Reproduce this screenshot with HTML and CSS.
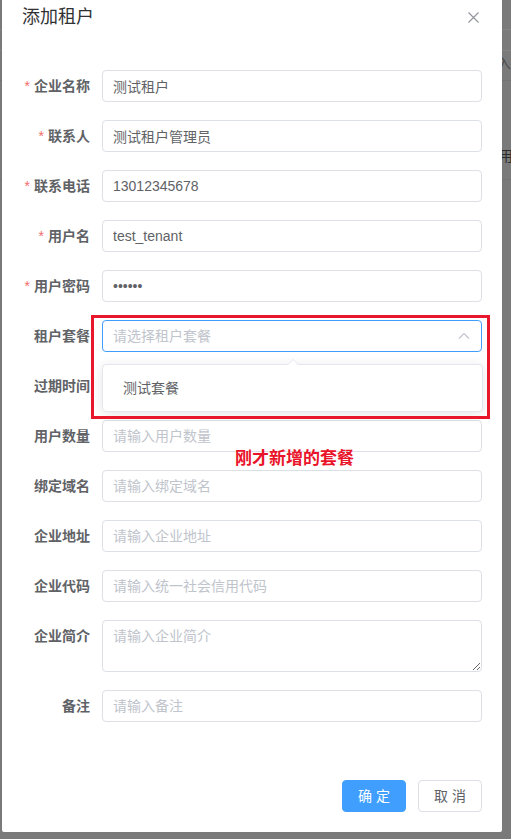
FILE: index.html
```html
<!DOCTYPE html>
<html lang="zh-CN">
<head>
<meta charset="utf-8">
<title>添加租户</title>
<link rel="stylesheet" href="styles.css">
</head>
<body>
<span class="backdrop-glyph glyph-a">入</span>
<span class="backdrop-glyph glyph-b">用</span>
<div class="dialog">
  <div class="dialog-header">
    <span class="dialog-title">添加租户</span>
    <button class="dialog-close" type="button" aria-label="关闭">
      <svg width="11" height="11" viewBox="0 0 11 11"><path d="M0.5 0.5L10.5 10.5M10.5 0.5L0.5 10.5" stroke="#909399" stroke-width="1.1" fill="none"/></svg>
    </button>
  </div>
  <form class="dialog-body">
    <div class="form-item required">
      <label class="form-label">企业名称</label>
      <div class="form-content"><input class="input" value="测试租户"></div>
    </div>
    <div class="form-item required">
      <label class="form-label">联系人</label>
      <div class="form-content"><input class="input" value="测试租户管理员"></div>
    </div>
    <div class="form-item required">
      <label class="form-label">联系电话</label>
      <div class="form-content"><input class="input" value="13012345678"></div>
    </div>
    <div class="form-item required">
      <label class="form-label">用户名</label>
      <div class="form-content"><input class="input" value="test_tenant"></div>
    </div>
    <div class="form-item required">
      <label class="form-label">用户密码</label>
      <div class="form-content"><input class="input" type="password" value="123456"></div>
    </div>
    <div class="form-item">
      <label class="form-label">租户套餐</label>
      <div class="form-content">
        <div class="select is-focus">
          <span class="select-placeholder">请选择租户套餐</span>
          <span class="select-suffix">
            <svg width="14" height="14" viewBox="0 0 14 14"><path d="M2 9.5L7 4.5L12 9.5" stroke="#C0C4CC" stroke-width="1.2" fill="none"/></svg>
          </span>
        </div>
        <div class="select-dropdown">
          <ul class="select-list">
            <li class="select-option">测试套餐</li>
          </ul>
        </div>
        <div class="annot-box"></div>
      </div>
    </div>
    <div class="form-item">
      <label class="form-label">过期时间</label>
      <div class="form-content"><input class="input" placeholder="请选择过期时间"></div>
    </div>
    <div class="form-item">
      <label class="form-label">用户数量</label>
      <div class="form-content">
        <input class="input" placeholder="请输入用户数量">
        <span class="annot-text">刚才新增的套餐</span>
      </div>
    </div>
    <div class="form-item">
      <label class="form-label">绑定域名</label>
      <div class="form-content"><input class="input" placeholder="请输入绑定域名"></div>
    </div>
    <div class="form-item">
      <label class="form-label">企业地址</label>
      <div class="form-content"><input class="input" placeholder="请输入企业地址"></div>
    </div>
    <div class="form-item">
      <label class="form-label">企业代码</label>
      <div class="form-content"><input class="input" placeholder="请输入统一社会信用代码"></div>
    </div>
    <div class="form-item">
      <label class="form-label">企业简介</label>
      <div class="form-content"><textarea class="textarea" placeholder="请输入企业简介"></textarea></div>
    </div>
    <div class="form-item">
      <label class="form-label">备注</label>
      <div class="form-content"><input class="input" placeholder="请输入备注"></div>
    </div>
  </form>
  <div class="dialog-footer">
    <button class="btn btn-primary" type="button">确 定</button>
    <button class="btn" type="button">取 消</button>
  </div>
</div>
</body>
</html>
```

FILE: styles.css
```css
html, body {
  margin: 0;
  padding: 0;
}

body {
  position: relative;
  background-color: #7a7a7a;
  background-image:
    linear-gradient(#848484, #848484),
    linear-gradient(#848484, #848484),
    linear-gradient(#727272, #727272),
    linear-gradient(#727272, #727272);
  background-size: 100% 1px;
  background-repeat: no-repeat;
  background-position: 0 29px, 0 50px, 0 80px, 0 179px;
  font-family: "Liberation Sans", "Noto Sans CJK SC", sans-serif;
  font-size: 14px;
  color: #606266;
}

.backdrop-glyph {
  position: absolute;
  z-index: 0;
  font-size: 14px;
  line-height: 16px;
}

.glyph-a {
  left: 497px;
  top: 55px;
  color: #4a4a4a;
}

.glyph-b {
  left: 499px;
  top: 148px;
  color: #2c2c2c;
}

.dialog {
  position: relative;
  z-index: 1;
  width: 500px;
  margin-left: 2px;
  background: #fff;
  border-radius: 0 0 2px 2px;
}

.dialog-header {
  display: flex;
  align-items: center;
  justify-content: space-between;
  padding: 5px 20px 11px 20px;
}

.dialog-title {
  font-size: 18px;
  line-height: 24px;
  color: #303133;
}

.dialog-close {
  display: flex;
  align-items: center;
  justify-content: center;
  width: 16px;
  height: 16px;
  padding: 0;
  margin-right: 1px;
  border: 0;
  background: transparent;
}

.dialog-body {
  display: block;
  margin: 0;
  padding: 30px 20px;
}

.form-item {
  display: flex;
  margin-bottom: 18px;
}

.form-label {
  flex: none;
  width: 80px;
  box-sizing: border-box;
  padding-right: 12px;
  text-align: right;
  line-height: 32px;
  font-size: 14px;
  font-weight: 700;
  color: #606266;
  white-space: nowrap;
}

.required .form-label::before {
  content: "*";
  color: #f56c6c;
  margin-right: 4px;
  font-weight: 400;
}

.form-content {
  flex: 1;
  position: relative;
  min-width: 0;
}

.input,
.textarea {
  display: block;
  width: 100%;
  box-sizing: border-box;
  border: 1px solid #dcdfe6;
  border-radius: 4px;
  background: #fff;
  font-family: "Liberation Sans", "Noto Sans CJK SC", sans-serif;
  font-size: 14px;
  color: #606266;
  outline: none;
  margin: 0;
}

.input {
  height: 32px;
  line-height: 30px;
  padding: 0 10px;
}

.textarea {
  height: 52px;
  padding: 5px 10px;
  line-height: 21px;
  resize: vertical;
}

.input::placeholder,
.textarea::placeholder {
  color: #c0c4cc;
}

.select {
  display: flex;
  align-items: center;
  height: 32px;
  box-sizing: border-box;
  border: 1px solid #409eff;
  border-radius: 4px;
  padding: 0 5px 0 10px;
  background: #fff;
}

.select-placeholder {
  flex: 1;
  color: #c0c4cc;
  line-height: 30px;
}

.select-suffix {
  display: flex;
  align-items: center;
  justify-content: center;
  width: 25px;
  height: 30px;
}

.select-dropdown {
  position: absolute;
  top: calc(100% + 12px);
  left: 0;
  right: -1px;
  z-index: 5;
  background: #fff;
  border: 1px solid #e4e7ed;
  border-radius: 4px;
  box-shadow: 0 2px 12px 0 rgba(0, 0, 0, 0.1);
}

.select-dropdown::before,
.select-dropdown::after {
  content: "";
  position: absolute;
  left: 50%;
  width: 0;
  height: 0;
  border-style: solid;
  border-color: transparent;
  transform: translateX(-50%);
}

.select-dropdown::before {
  top: -6px;
  border-width: 0 6px 6px 6px;
  border-bottom-color: #e4e7ed;
}

.select-dropdown::after {
  top: -5px;
  border-width: 0 6px 6px 6px;
  border-bottom-color: #fff;
}

.select-list {
  list-style: none;
  margin: 0;
  padding: 6px 0;
}

.select-option {
  padding: 0 20px;
  height: 34px;
  line-height: 34px;
  font-size: 14px;
  color: #606266;
}

.annot-box {
  position: absolute;
  left: -11px;
  top: -5px;
  width: 399px;
  height: 104px;
  box-sizing: border-box;
  border: 3px solid #e8172b;
  z-index: 6;
  pointer-events: none;
}

.annot-text {
  position: absolute;
  left: 133px;
  top: 29px;
  font-size: 17px;
  line-height: 20px;
  font-weight: 700;
  color: #e9142a;
  white-space: nowrap;
  z-index: 6;
}

.dialog-footer {
  display: flex;
  justify-content: flex-end;
  gap: 12px;
  padding: 10px 20px 20px;
}

.btn {
  width: 64px;
  height: 32px;
  box-sizing: border-box;
  padding: 0;
  border: 1px solid #dcdfe6;
  border-radius: 4px;
  background: #fff;
  color: #606266;
  font-family: "Liberation Sans", "Noto Sans CJK SC", sans-serif;
  font-size: 14px;
  line-height: 30px;
  text-align: center;
}

.btn-primary {
  background: #409eff;
  border-color: #409eff;
  color: #fff;
}
```
